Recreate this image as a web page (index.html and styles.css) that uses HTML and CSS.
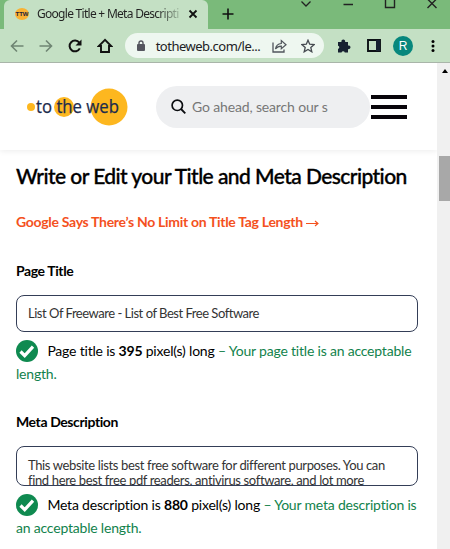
FILE: index.html
```html
<!DOCTYPE html>
<html lang="en">

<head>
    <meta charset="UTF-8">
    <meta name="viewport" content="width=device-width, initial-scale=1.0">
    <title>Google Title + Meta Description</title>
    <link rel="stylesheet" href="styles.css">
</head>

<body>
    <div class="tabs">
        <div class="tab">
            <span class="favicon">TTW</span>
            <span class="tab-title">Google Title + Meta Descripti</span>
            <svg class="tab-close" width="10" height="10" viewBox="0 0 10 10"><path d="M1.5 1.5l7 7M8.5 1.5l-7 7" stroke="#111" stroke-width="1.8"/></svg>
        </div>
        <svg class="new-tab" width="12" height="12" viewBox="0 0 12 12"><path d="M6 0.5v11M0.5 6h11" stroke="#111" stroke-width="1.6"/></svg>
        <div class="window-buttons">
            <svg width="12" height="12" viewBox="0 0 12 12"><path d="M1.5 3.5L6 8l4.5-4.5" fill="none" stroke="#222" stroke-width="1.3"/></svg>
            <svg width="12" height="12" viewBox="0 0 12 12"><path d="M1.5 6.5h9.5" stroke="#222" stroke-width="1.5"/></svg>
            <svg width="12" height="12" viewBox="0 0 12 12"><path d="M1.5 0v9.5h9V0" fill="none" stroke="#222" stroke-width="1.4"/></svg>
            <svg width="12" height="12" viewBox="0 0 12 12"><path d="M1.5 1l9 9M10.5 1l-9 9" stroke="#222" stroke-width="1.4"/></svg>
        </div>
    </div>

    <div class="toolbar">
        <div class="nav">
            <svg width="14" height="14" viewBox="0 0 14 14"><path d="M13.5 7H1.5M7 1.5L1.5 7 7 12.5" fill="none" stroke="#6f8573" stroke-width="1.6"/></svg>
            <svg width="14" height="14" viewBox="0 0 14 14"><path d="M0.5 7h12M7 1.5L12.5 7 7 12.5" fill="none" stroke="#6f8573" stroke-width="1.6"/></svg>
            <svg width="14" height="14" viewBox="0 0 14 14"><path d="M11.8 9.4A5.4 5.4 0 1 1 11.3 3.7" fill="none" stroke="#111" stroke-width="2"/><path d="M13.5 0.5v6h-6z" fill="#111"/></svg>
            <svg width="16" height="16" viewBox="0 0 16 16"><path d="M8 1.8L1.8 8H4v6h8V8h2.2z" fill="none" stroke="#111" stroke-width="1.9"/></svg>
        </div>
        <div class="address">
            <svg width="8" height="12" viewBox="0 0 8 12"><path d="M2 5V3a2 2 0 0 1 4 0v2" fill="none" stroke="#55565f" stroke-width="1.4"/><rect y="4" width="8" height="7" rx="1" fill="#55565f"/></svg>
            <span class="url">totheweb.com/le...</span>
            <svg class="share" width="15" height="14" viewBox="0 0 15 14"><path d="M1 3.5V13h11v-2.5" fill="none" stroke="#50555c" stroke-width="1.3"/><path d="M3.5 10C4 6.5 6 4.700 9.300 4.500V1.500L14 5.700 9.300 9.600V7.200C6.500 7.200 5 8 3.500 10z" fill="none" stroke="#50555c" stroke-width="1.2"/></svg>
            <svg width="14" height="14" viewBox="0 0 14 14"><path d="M7 1.2l1.7 4 4.4.4-3.3 2.900 1 4.300L7 10.500l-3.800 2.300 1-4.300L.9 5.600l4.400-.4z" fill="none" stroke="#454a50" stroke-width="1.3"/></svg>
        </div>
        <svg class="extension" width="14" height="14" viewBox="0 0 14 14"><path d="M1 3h3.500a1.900 1.900 0 1 1 3.600 0H11v3.500a1.900 1.900 0 1 1 0 3.600V13.500H7.800a1.700 1.700 0 0 0-3.300 0H1V10a1.700 1.700 0 0 0 0-3.300z" fill="#172131"/></svg>
        <svg class="panel" width="14" height="13" viewBox="0 0 14 13"><path d="M1 1h12v11H1z" fill="none" stroke="#0c1115" stroke-width="1.9"/><path d="M9 1h4v11H9z" fill="#172131"/></svg>
        <span class="avatar">R</span>
        <svg width="4" height="14" viewBox="0 0 4 14"><circle cx="2" cy="2.5" r="1.5"/><circle cx="2" cy="7" r="1.5"/><circle cx="2" cy="11.5" r="1.5"/></svg>
    </div>

    <div class="viewport">
        <div class="page">
            <header>
                <svg class="logo" width="102" height="40" viewBox="0 0 102 40">
                    <circle cx="4" cy="20" r="4" fill="#fdb71f"/>
                    <circle cx="37" cy="20" r="10" fill="#fdb71f"/>
                    <circle cx="82" cy="20" r="18.5" fill="#fdb71f"/>
                    <text x="9" y="25.5" textLength="83" lengthAdjust="spacingAndGlyphs">to the web</text>
                </svg>
                <div class="search">
                    <svg width="15" height="15" viewBox="0 0 15 15"><circle cx="6.3" cy="6.3" r="5.2" fill="none" stroke="#0b0d10" stroke-width="1.7"/><path d="M10 10l4.3 4.3" stroke="#0b0d10" stroke-width="1.8"/></svg>
                    <span>Go ahead, search our s</span>
                </div>
                <div class="menu"><i></i><i></i><i></i></div>
            </header>

            <main>
                <h1>Write or Edit your Title and Meta Description</h1>
                <a class="article-link">Google Says There’s No Limit on Title Tag Length <svg width="13" height="8" viewBox="0 0 13 8"><path d="M0 4.5h12M9 2L12 4.5 9 7" fill="none" stroke="#f4511e" stroke-width="1.1"/></svg></a>

                <h2 class="title-label">Page Title</h2>
                <div class="field title-field">List Of Freeware - List of Best Free Software</div>
                <p class="result">
                    <svg width="22" height="22" viewBox="0 0 22 22"><circle cx="11" cy="11" r="11" fill="#0f8a50"/><path d="M4.5 11.5l4.2 4.2 8.3-9" fill="none" stroke="#fff" stroke-width="3.2"/></svg>
                    Page title is <b>395</b> pixel(s) long <em>– Your page title is an acceptable<br>length.</em>
                </p>

                <h2 class="meta-label">Meta Description</h2>
                <div class="field meta-field">This website lists best free software for different purposes. You can<br>find here best free pdf readers, antivirus software, and lot more</div>
                <p class="result">
                    <svg width="22" height="22" viewBox="0 0 22 22"><circle cx="11" cy="11" r="11" fill="#0f8a50"/><path d="M4.5 11.5l4.2 4.2 8.3-9" fill="none" stroke="#fff" stroke-width="3.2"/></svg>
                    Meta description is <b>880</b> pixel(s) long <em>– Your meta description is<br>an acceptable length.</em>
                </p>
            </main>
        </div>
        <div class="scrollbar">
            <div class="arrow"></div>
            <div class="thumb"></div>
        </div>
    </div>
</body>

</html>
```
FILE: styles.css
```css
* {
    margin: 0;
    padding: 0;
    box-sizing: border-box;
}
body {
    width: 450px;
    height: 549px;
    overflow: hidden;
    background: #fff;
    color: #000;
    font-family: Lato, sans-serif;
}
svg {
    flex-shrink: 0;
}

/* browser window */
.tabs {
    display: flex;
    height: 29px;
    padding-left: 4px;
    background: #7aba7a;
}
.tab {
    display: flex;
    align-items: center;
    width: 204px;
    height: 29px;
    padding: 0 10px 2px 11px;
    border-radius: 6px 6px 0 0;
    background: #c4e0c4;
}
.favicon {
    width: 14px;
    height: 12px;
    margin-right: 8px;
    border-radius: 50%;
    background: #f9b233;
    color: #1d1d3d;
    font: bold 6px/12px "Liberation Sans", sans-serif;
    text-align: center;
}
.tab-title {
    width: 144px;
    white-space: nowrap;
    font: 12px "Noto Sans", sans-serif;
    letter-spacing: -0.72px;
    color: transparent;
    background: linear-gradient(to right, #222 120px, #a9c4a9 144px);
    -webkit-background-clip: text;
    background-clip: text;
}
.tab-close {
    margin-left: 7px;
}
.new-tab {
    margin: 8px 0 0 14px;
}
.window-buttons {
    display: flex;
    gap: 30px;
    margin: -2px 12px 0 auto;
}
.toolbar {
    display: flex;
    align-items: center;
    height: 34px;
    padding: 0 15px 0 10px;
    border-bottom: 1px solid #a9b5a9;
    background: #c4e0c4;
}
.nav {
    display: flex;
    align-items: center;
    gap: 15px;
    width: 115px;
}
.address {
    display: flex;
    align-items: center;
    width: 200px;
    height: 25px;
    padding: 0 9px 0 12px;
    border-radius: 13px;
    background: #eef7f0;
}
.url {
    margin-left: 11px;
    font: 13px "Noto Sans", sans-serif;
    letter-spacing: -0.5px;
    color: #202124;
    white-space: nowrap;
}
.share {
    margin: 0 14px 0 auto;
}
.extension {
    margin-left: 13px;
}
.panel {
    margin-left: 16px;
}
.avatar {
    width: 20px;
    height: 20px;
    margin: 0 18px 0 12px;
    border-radius: 50%;
    background: #07877d;
    color: #fff;
    font: 12px/20px "Liberation Sans", sans-serif;
    text-align: center;
}

/* page */
.viewport {
    display: flex;
    height: 486px;
}
.page {
    width: 437px;
    overflow: hidden;
}
header {
    display: flex;
    align-items: center;
    height: 87px;
    padding-left: 27px;
    box-shadow: 0 1px 6px rgba(0, 0, 0, 0.08);
}
.logo {
    margin-right: 27px;
}
.logo text {
    font: 18px "Open Sans", sans-serif;
    fill: #1c2b4d;
    stroke: #1c2b4d;
    stroke-width: 0.25px;
}
.search {
    display: flex;
    align-items: center;
    width: 214px;
    height: 42px;
    padding-left: 15px;
    border-radius: 21px;
    background: #eeeff1;
}
.search span {
    margin-left: 6px;
    white-space: nowrap;
    font-size: 14px;
    letter-spacing: -0.15px;
    color: #777;
}
.menu {
    display: flex;
    flex-direction: column;
    gap: 6px;
    width: 36px;
    margin-left: 1px;
}
.menu i {
    height: 4px;
    background: #08050a;
}
main {
    padding: 11px 19px 0 16px;
    white-space: nowrap;
}
h1 {
    height: 30px;
    font-size: 21px;
    font-weight: 500;
    line-height: 29px;
    letter-spacing: -0.56px;
    -webkit-text-stroke: 0.35px #000;
}
.article-link {
    display: block;
    margin-top: 21px;
    font-size: 14px;
    font-weight: bold;
    line-height: 20px;
    letter-spacing: -0.3px;
    color: #f4511e;
}
h2 {
    font-size: 14px;
    line-height: 20px;
    letter-spacing: -0.4px;
}
.title-label {
    margin-top: 29px;
}
.field {
    width: 402px;
    padding: 0 11px;
    border: 1px solid #343e57;
    border-radius: 8px;
    overflow: hidden;
    font-size: 13px;
    color: #333;
}
.title-field {
    height: 37px;
    margin-top: 14px;
    line-height: 35px;
    letter-spacing: -0.48px;
}
.result {
    margin-top: 7px;
    font-size: 14px;
    line-height: 23px;
    letter-spacing: -0.2px;
}
.result svg {
    margin: -4px 6px -4px 0;
    vertical-align: -2px;
}
.result em {
    font-style: normal;
    color: #12824c;
}
.meta-label {
    margin-top: 27px;
}
.meta-field {
    height: 40px;
    margin-top: 14px;
    padding-top: 11px;
    line-height: 15px;
    letter-spacing: -0.36px;
}

.scrollbar {
    width: 13px;
    padding: 6px 0 0 2px;
    background: #f0f0f0;
}
.arrow {
    width: 0;
    margin-left: 3px;
    border: 3px solid transparent;
    border-top: none;
    border-bottom: 4px solid #000;
}
.thumb {
    height: 45px;
    margin-top: 83px;
    background: #a8a8a8;
}
```
